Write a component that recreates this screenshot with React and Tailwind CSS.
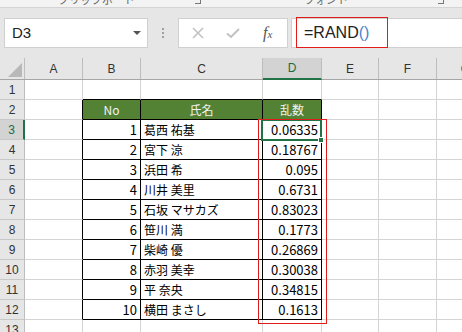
import React from 'react';

const cols = [
  { key: 'rh', w: 'w-[25px]' },
  { key: 'A', w: 'w-[58px]' },
  { key: 'B', w: 'w-[58px]' },
  { key: 'C', w: 'w-[122px]' },
  { key: 'D', w: 'w-[59px]' },
  { key: 'E', w: 'w-[57px]' },
  { key: 'F', w: 'w-[58px]' },
  { key: 'G', w: 'w-[58px]' },
];

const people = [
  { no: 1, name: '葛西 祐基', rand: '0.06335' },
  { no: 2, name: '宮下 涼', rand: '0.18767' },
  { no: 3, name: '浜田 希', rand: '0.095' },
  { no: 4, name: '川井 美里', rand: '0.6731' },
  { no: 5, name: '石坂 マサカズ', rand: '0.83023' },
  { no: 6, name: '笹川 満', rand: '0.1773' },
  { no: 7, name: '柴崎 優', rand: '0.26869' },
  { no: 8, name: '赤羽 美幸', rand: '0.30038' },
  { no: 9, name: '平 奈央', rand: '0.34815' },
  { no: 10, name: '横田 まさし', rand: '0.1613' },
];

const inTable = (r, c) => r >= 2 && r <= 12 && c >= 2 && c <= 4;

function Cell({ r, c }) {
  const table = inTable(r, c);
  const rightBlack = table || (c === 1 && r >= 2 && r <= 12);
  const bottomBlack = table || (r === 1 && c >= 2 && c <= 4);
  const header = r === 2 && table;

  let content = null;
  let align = 'justify-start';
  if (r === 2 && c === 2) content = 'No';
  if (r === 2 && c === 3) content = '氏名';
  if (r === 2 && c === 4) content = '乱数';
  if (header) align = 'justify-center';
  if (r >= 3 && r <= 12) {
    const p = people[r - 3];
    if (c === 2) { content = p.no; align = 'justify-end'; }
    if (c === 3) { content = p.name; align = 'justify-start'; }
    if (c === 4) { content = p.rand; align = 'justify-end'; }
  }

  return (
    <div
      className={`${cols[c].w} shrink-0 h-[20px] flex items-center px-[3px] border-r border-b overflow-hidden whitespace-nowrap font-['Noto_Sans_CJK_JP',sans-serif] ${align} ${
        rightBlack ? 'border-r-black' : 'border-r-[#d4d4d4]'
      } ${bottomBlack ? 'border-b-black' : 'border-b-[#d4d4d4]'} ${
        header ? 'bg-[#548235] text-[#f2f2f2] text-[12px]' : c === 3 ? 'text-[12px] text-black' : 'text-[13px] text-black'
      }`}
    >
      {content}
    </div>
  );
}

export default function App() {
  const rows = Array.from({ length: 13 }, (_, i) => i + 1);
  return (
    <div className="w-[462px] h-[332px] overflow-hidden bg-white font-['Liberation_Sans',sans-serif]">
      {/* ribbon group labels, cut off at the top */}
      <div className="h-[8px] bg-[#f3f3f3] border-b border-[#d4d4d4] overflow-hidden text-[11px] text-[#666] leading-none">
        <div className="flex items-start -mt-[6px] font-['Noto_Sans_CJK_JP',sans-serif]">
          <span className="ml-[58px]">クリップボード</span>
          <span className="ml-[60px] w-[6px] h-[6px] border-r border-b border-[#777] mt-[4px]" />
          <span className="ml-[103px]">フォント</span>
          <span className="ml-[90px] w-[6px] h-[6px] border-r border-b border-[#777] mt-[4px]" />
        </div>
      </div>

      {/* formula bar */}
      <div className="h-[50px] bg-[#e6e6e6] flex items-start pt-[10px] pl-[4px]">
        <div className="w-[144px] h-[30px] bg-white border border-[#d0d0d0] flex items-center pl-[7px] pr-[6px]">
          <span className="text-[15px] text-[#222] flex-1">D3</span>
          <span className="w-0 h-0 border-l-[4px] border-r-[4px] border-t-[4px] border-l-transparent border-r-transparent border-t-[#555]" />
        </div>
        <div className="w-[30px] h-[30px] flex flex-col items-center justify-center gap-[2px]">
          <span className="w-[2px] h-[2px] bg-[#a0a0a0]" />
          <span className="w-[2px] h-[2px] bg-[#a0a0a0]" />
          <span className="w-[2px] h-[2px] bg-[#a0a0a0]" />
        </div>
        <div className="w-[110px] h-[30px] bg-white border border-[#d0d0d0] flex items-center px-[2px]">
          <div className="w-[35px] flex justify-center">
            <svg width="12" height="12" viewBox="0 0 12 12">
              <path d="M1 1 L11 11 M11 1 L1 11" stroke="#c2c2c2" strokeWidth="1.6" fill="none" />
            </svg>
          </div>
          <div className="w-[35px] flex justify-center">
            <svg width="14" height="12" viewBox="0 0 14 12">
              <path d="M1 6.5 L5 10 L13 2" stroke="#c2c2c2" strokeWidth="2" fill="none" />
            </svg>
          </div>
          <div className="w-[35px] flex justify-center">
            <span className="font-['Liberation_Serif',serif] italic text-[16px] text-[#555] leading-none">
              f<span className="text-[11px]">x</span>
            </span>
          </div>
        </div>
        <div className="flex-1 ml-[3px] h-[30px] bg-white border border-r-0 border-[#d0d0d0] relative flex items-center pl-[12px]">
          <span className="text-[16px] text-[#222]">
            =RAND<span className="text-[#4a7fd0]">()</span>
          </span>
          <div className="absolute left-[4px] top-[-2px] w-[92px] h-[31px] border border-[#e21b1b]" />
        </div>
      </div>

      {/* sheet grid */}
      <div className="relative">
        <div className="flex h-[22px] bg-[#e6e6e6] border-b border-[#a6a6a6] text-[12px] text-[#333]">
          <div className="w-[25px] shrink-0 border-r border-[#bdbdbd] relative">
            <svg className="absolute right-[2px] bottom-[2px]" width="14" height="14" viewBox="0 0 14 14">
              <path d="M14 0 L14 14 L0 14 Z" fill="#b8b8b8" />
            </svg>
          </div>
          {cols.slice(1).map((col) =>
            col.key === 'D' ? (
              <div key={col.key} className={`${col.w} shrink-0 border-r border-[#bdbdbd] bg-[#d3d3d3] flex items-center justify-center text-[#1e6b41] border-b-2 border-b-[#217346] mb-[-1px]`}>
                {col.key}
              </div>
            ) : (
              <div key={col.key} className={`${col.w} shrink-0 border-r border-[#bdbdbd] flex items-center justify-center`}>
                {col.key}
              </div>
            )
          )}
        </div>

        {rows.map((r) => (
          <div key={r} className="flex">
            <div
              className={`w-[25px] shrink-0 h-[20px] border-b border-b-[#c8c8c8] flex items-center justify-center text-[12px] ${
                r === 3
                  ? 'bg-[#d3d3d3] text-[#1e6b41] border-r-2 border-r-[#217346]'
                  : 'bg-[#e6e6e6] text-[#333] border-r border-r-[#bdbdbd]'
              }`}
            >
              {r}
            </div>
            {[1, 2, 3, 4, 5, 6, 7].map((c) => (
              <Cell key={c} r={r} c={c} />
            ))}
          </div>
        ))}

        {/* active cell D3 */}
        <div className="absolute left-[261px] top-[61px] w-[61px] h-[22px] border-2 border-[#217346]" />
        <div className="absolute left-[318px] top-[79px] w-[6px] h-[6px] bg-[#217346] border border-white" />

        {/* red annotation around D3:D12 */}
        <div className="absolute left-[258px] top-[61px] w-[69px] h-[205px] border border-[#e21b1b]" />
      </div>
    </div>
  );
}
